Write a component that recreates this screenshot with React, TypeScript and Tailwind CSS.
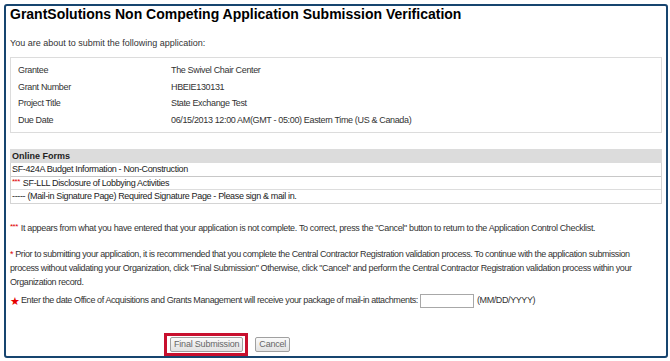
import React from 'react';

const rows = [
  ['Grantee', 'The Swivel Chair Center'],
  ['Grant Number', 'HBEIE130131'],
  ['Project Title', 'State Exchange Test'],
  ['Due Date', '06/15/2013 12:00 AM(GMT - 05:00) Eastern Time (US & Canada)'],
];

const Stars = () => (
  <span className="text-[#e00000] text-[8px] align-top leading-[10px] mr-[3px] tracking-[-0.5px]">***</span>
);

const btn =
  'h-[15px] px-[3px] border border-[#a0a0a0] rounded-[2px] bg-gradient-to-b from-[#fafafa] to-[#e2e2e2] text-[9px] leading-[13px] text-[#666] tracking-[-0.2px]';

const App: React.FC = () => {
  return (
    <div
      className="w-[670px] h-[361px] bg-white overflow-hidden pt-[4px] pl-[4px]"
      style={{ fontFamily: '"Liberation Sans", Arial, sans-serif' }}
    >
      <div className="w-[664px] h-[354px] border-2 border-[#17456f] rounded-[3px] px-[4px] text-[9px] text-[#333] tracking-[-0.35px]">
        <h1 className="text-[14px] font-bold text-black leading-[16px] tracking-normal">
          GrantSolutions Non Competing Application Submission Verification
        </h1>
        <p className="mt-[15px] leading-[12px] tracking-normal">You are about to submit the following application:</p>

        <div className="mt-[8px] border border-[#dcdcdc] pt-[4px] pb-[4px] px-[7px]">
          {rows.map(([k, v]) => (
            <div key={k} className="flex h-[16.6px] leading-[17px]">
              <div className="w-[153px]">{k}</div>
              <div>{v}</div>
            </div>
          ))}
        </div>

        <div className="mt-[16px] text-[#222]">
          <div className="bg-[#dcdcdc] font-bold h-[14px] px-[2px] leading-[14px] tracking-normal">Online Forms</div>
          <div className="border border-t-0 border-[#d4d4d4]">
            <div className="h-[13.4px] px-[1px] leading-[13px] border-b border-[#c8c8c8]">
              SF-424A Budget Information - Non-Construction
            </div>
            <div className="h-[13.4px] px-[1px] leading-[13px] border-b border-[#dddddd]">
              <Stars />SF-LLL Disclosure of Lobbying Activities
            </div>
            <div className="h-[13px] px-[1px] leading-[13px]">
              ----- (Mail-in Signature Page) Required Signature Page - Please sign &amp; mail in.
            </div>
          </div>
        </div>

        <p className="mt-[18px] leading-[12px] whitespace-nowrap">
          <Stars />It appears from what you have entered that your application is not complete. To correct, press the "Cancel" button to return to the Application Control Checklist.
        </p>

        <p className="mt-[13px] leading-[14px] whitespace-nowrap tracking-[-0.4px]">
          <span className="text-[#dd0000]">*</span> Prior to submitting your application, it is recommended that you complete the Central Contractor Registration validation process. To continue with the application submission
          <br />
          process without validating your Organization, click "Final Submission" Otherwise, click "Cancel" and perform the Central Contractor Registration validation process within your
          <br />
          Organization record.
        </p>

        <div className="mt-[5px] flex items-center h-[14px] whitespace-nowrap tracking-[-0.4px]">
          <span className="text-[#e60000] text-[11px] leading-[11px] mr-[1px] tracking-normal">★</span>
          <span>Enter the date Office of Acquisitions and Grants Management will receive your package of mail-in attachments:</span>
          <input className="ml-[2px] w-[54px] h-[14px] border border-[#a8a8a8] bg-white shrink-0" />
          <span className="ml-[3px]">(MM/DD/YYYY)</span>
        </div>

        <div className="mt-[25px] flex items-start ml-[154px]">
          <div className="border-[3px] border-[#c8102e] pt-[1px] pl-[3px] pr-[2px] pb-[1px]">
            <button className={btn}>Final Submission</button>
          </div>
          <button className={`ml-[7px] mt-[4px] ${btn}`}>Cancel</button>
        </div>
      </div>
    </div>
  );
};

export default App;
